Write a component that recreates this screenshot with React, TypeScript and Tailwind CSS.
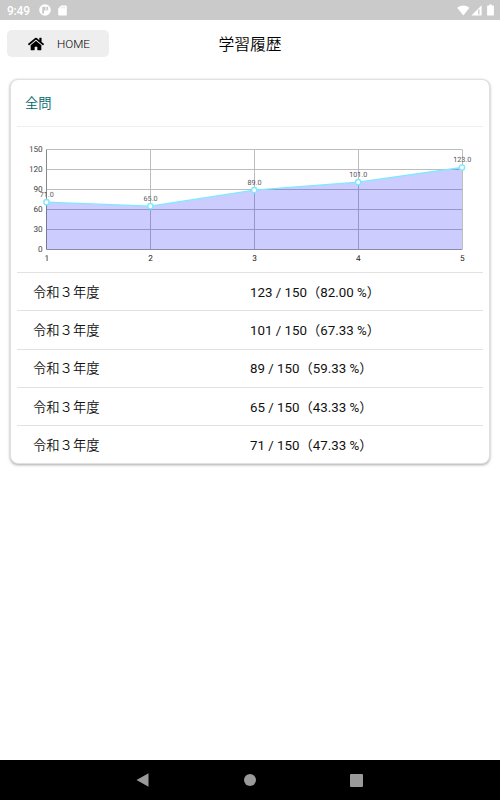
import React from 'react';
import { FaHome } from 'react-icons/fa';

interface HistoryEntry {
  id: number;
  title: string;
  score: number;
  total: number;
}

const history: HistoryEntry[] = [
  { id: 5, title: '令和３年度', score: 123, total: 150 },
  { id: 4, title: '令和３年度', score: 101, total: 150 },
  { id: 3, title: '令和３年度', score: 89, total: 150 },
  { id: 2, title: '令和３年度', score: 65, total: 150 },
  { id: 1, title: '令和３年度', score: 71, total: 150 },
];

const TICKS = [0, 30, 60, 90, 120, 150];

const StatusBar: React.FC = () => (
  <div className="flex h-5 shrink-0 items-center bg-[#cacaca] pl-[7px] pr-1.5 text-white">
    <span className="w-8 pt-px text-[12px] leading-5 font-medium tracking-[-0.2px]">9:49</span>
    <svg className="h-3 w-3" viewBox="0 0 12 12">
      <circle cx="6" cy="6" r="5.8" fill="#fff" />
      <path d="M3.2 2.8h3.4v3.8H5v3H3.2z" fill="#cacaca" />
      <path d="M7.4 2.8h1.8v2.4a1.4 1.4 0 0 1-1.8 1.3z" fill="#cacaca" />
    </svg>
    <svg className="ml-[7px] h-[11px] w-[9px]" viewBox="0 0 9 11">
      <path d="M3.2.5H8a.8.8 0 0 1 .8.8v8.4a.8.8 0 0 1-.8.8H1a.8.8 0 0 1-.8-.8V3.5z" fill="#fff" />
      <path d="M3.4 1.8v1.6M5.1 1.8v1.6M6.8 1.8v1.6" stroke="#cacaca" strokeWidth=".6" />
    </svg>
    <div className="ml-auto flex items-center">
      <svg className="h-[11px] w-[13px]" viewBox="0 0 13 11">
        <path d="M.2 2.8a9.2 9.2 0 0 1 12.2 0L6.3 10.4z" fill="#fff" />
      </svg>
      <svg className="ml-px h-[11px] w-[11px]" viewBox="0 0 11 11">
        <path d="M10.6.3v10.2H.4z" fill="#fff" />
        <path d="M7.2 4.5h1.3v5H7.2z" fill="#cacaca" />
      </svg>
      <svg className="ml-[5px] h-3 w-[7px]" viewBox="0 0 7 12">
        <path d="M2.2.4h2.6v1.2h1.5a.6.6 0 0 1 .6.6v8.7a.6.6 0 0 1-.6.6H.7a.6.6 0 0 1-.6-.6V2.2a.6.6 0 0 1 .6-.6h1.5z" fill="#fff" />
      </svg>
    </div>
  </div>
);

const ScoreChart: React.FC<{ scores: number[] }> = ({ scores }) => {
  const left = 29.5;
  const right = 445;
  const bottom = 122.5;
  const x = (i: number) => left + (i * (right - left)) / (scores.length - 1);
  const y = (v: number) => bottom - (v * 100) / 150;
  const line = scores.map((s, i) => `${x(i)},${y(s)}`).join(' ');

  return (
    <svg className="block h-[145px] w-[466px]" viewBox="0 0 466 145" textRendering="geometricPrecision">
      {TICKS.map((t) => (
        <g key={t}>
          <line x1={left} x2={right} y1={Math.floor(y(t)) + 0.5} y2={Math.floor(y(t)) + 0.5} stroke="#bdbdbd" />
          <text x="25.7" y={y(t) + 2.8} textAnchor="end" fontSize="8.2" fill="#444">{t}</text>
        </g>
      ))}
      {scores.map((_, i) => (
        <g key={i}>
          <line x1={Math.floor(x(i)) + 0.5} x2={Math.floor(x(i)) + 0.5} y1="22.5" y2={bottom} stroke={i === 0 ? '#888' : '#bdbdbd'} />
          <text x={x(i) + 0.3} y="134" textAnchor="middle" fontSize="8.2" fill="#222">{i + 1}</text>
        </g>
      ))}
      <line x1={left} x2={right} y1={bottom} y2={bottom} stroke="#9a9a9a" />
      <polygon points={`${left},${bottom} ${line} ${right},${bottom}`} fill="#0000ff" fillOpacity="0.2" />
      <polyline points={line} fill="none" stroke="#7de9ff" strokeWidth="1.3" />
      {scores.map((s, i) => (
        <g key={i}>
          <circle cx={x(i)} cy={y(s)} r="2.6" fill="#fff" stroke="#7de9ff" strokeWidth="1.4" />
          <text x={x(i) + 0.2} y={y(s) - 5.6} textAnchor="middle" fontSize="7.2" fill="#555">{s.toFixed(1)}</text>
        </g>
      ))}
    </svg>
  );
};

const HistoryRow: React.FC<{ entry: HistoryEntry }> = ({ entry }) => (
  <li className="grid h-[38.35px] grid-cols-2 items-center border-t border-[#e2e2e2] pt-0.5 text-[13.3px] text-[#111]">
    <span className="pl-4 font-[350]">{entry.title}</span>
    <span>
      {entry.score} / {entry.total}（{((entry.score / entry.total) * 100).toFixed(2)} %）
    </span>
  </li>
);

const NavBar: React.FC = () => (
  <div className="flex h-10 shrink-0 items-center justify-between bg-black pl-[136px] pr-[137px]">
    <svg className="h-[14px] w-[13px]" viewBox="0 0 13 14">
      <path d="M12.5.3v13.4L.5 7z" fill="#9a9a9a" />
    </svg>
    <div className="h-3 w-3 rounded-full bg-[#9a9a9a]" />
    <div className="h-[13px] w-[13px] rounded-[1px] bg-[#9a9a9a]" />
  </div>
);

export default function App() {
  const scores = [...history].reverse().map((h) => h.score);

  return (
    <div className="flex h-[800px] w-[500px] flex-col overflow-hidden bg-white font-['Roboto','Noto_Sans_CJK_JP',sans-serif]">
      <StatusBar />
      <header className="grid h-[59px] shrink-0 grid-cols-[1fr_auto_1fr] items-start px-[7px] pt-[10px]">
        <button className="flex h-[27px] w-[102px] items-center rounded-[5px] bg-[#eeeeee] pl-[21px] text-[11.7px] text-black">
          <FaHome size={16} />
          <span className="ml-[13px] pt-0.5 font-[350]">HOME</span>
        </button>
        <h1 className="pt-px text-[15.8px] leading-7 font-[350] text-black">学習履歴</h1>
      </header>
      <main className="mx-[10px] h-[385px] shrink-0 rounded-[8px] border border-[#e0e0e0] bg-white px-1.5 shadow-[0_1px_3px_rgba(0,0,0,0.35)]">
        <h2 className="h-[47px] border-b border-[#eeeeee] pl-2 text-[13.3px] leading-[47px] font-[350] text-[#00696b]">全問</h2>
        <ScoreChart scores={scores} />
        <ul>
          {history.map((entry) => (
            <HistoryRow key={entry.id} entry={entry} />
          ))}
        </ul>
      </main>
      <div className="grow" />
      <NavBar />
    </div>
  );
}
